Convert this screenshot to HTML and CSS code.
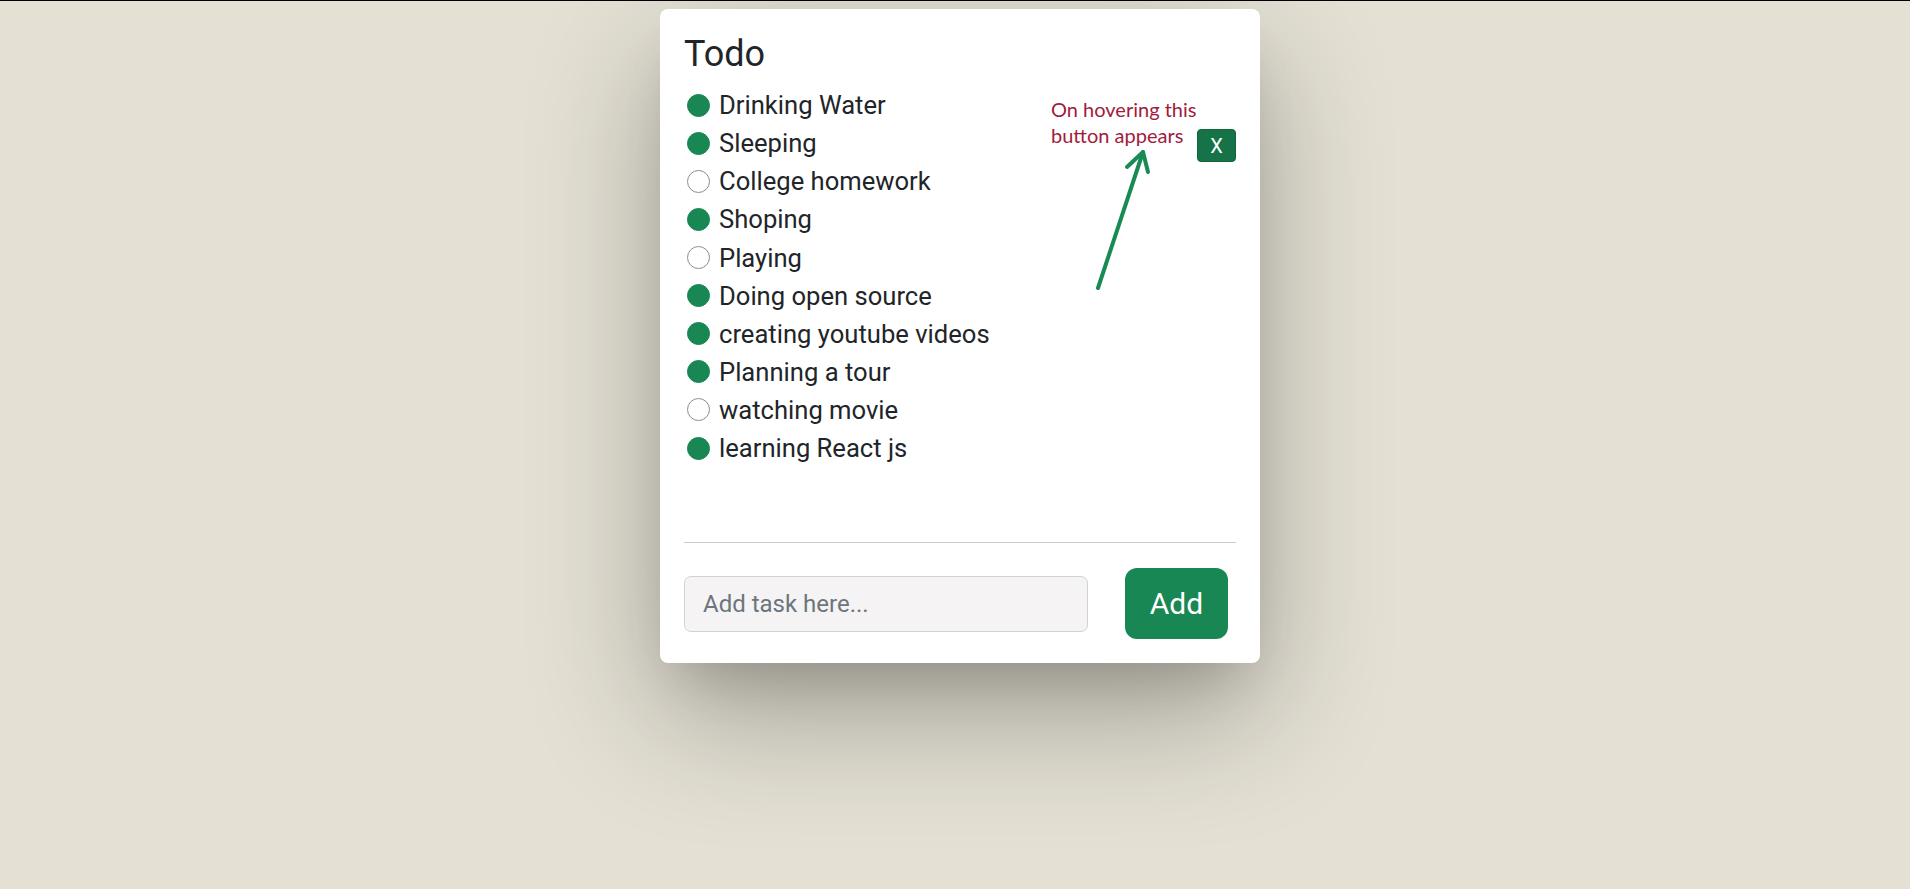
FILE: index.html
```html
<!DOCTYPE html>
<html lang="en">
<head>
<meta charset="utf-8">
<title>Todo</title>
<link rel="stylesheet" href="styles.css">
</head>
<body>
<div class="topline"></div>
<div class="page">
  <div class="card">
    <h1 class="title">Todo</h1>
    <ul class="list">
      <li class="item"><span class="dot on"></span><span class="label">Drinking Water</span></li>
      <li class="item"><span class="dot on"></span><span class="label">Sleeping</span><button class="del">X</button></li>
      <li class="item"><span class="dot"></span><span class="label">College homework</span></li>
      <li class="item"><span class="dot on"></span><span class="label">Shoping</span></li>
      <li class="item"><span class="dot"></span><span class="label">Playing</span></li>
      <li class="item"><span class="dot on"></span><span class="label">Doing open source</span></li>
      <li class="item"><span class="dot on"></span><span class="label">creating youtube videos</span></li>
      <li class="item"><span class="dot on"></span><span class="label">Planning a tour</span></li>
      <li class="item"><span class="dot"></span><span class="label">watching movie</span></li>
      <li class="item"><span class="dot on"></span><span class="label">learning React js</span></li>
    </ul>
    <hr class="divider">
    <div class="form">
      <input class="task" type="text" placeholder="Add task here...">
      <button class="add">Add</button>
    </div>
    <div class="note">On hovering this<br>button appears</div>
    <svg class="arrow" width="80" height="160" viewBox="0 0 80 160">
      <g fill="none" stroke="#1a8a55" stroke-width="4" stroke-linecap="round" stroke-linejoin="round">
        <line x1="8" y1="146" x2="53" y2="10"/>
        <polyline points="37,25 53,10 58,30"/>
      </g>
    </svg>
  </div>
</div>
</body>
</html>
```
FILE: styles.css
```css
html, body {
  margin: 0;
  padding: 0;
}
body {
  background: #e4e0d4;
  font-family: Roboto, "Liberation Sans", sans-serif;
  color: #212529;
  min-height: 889px;
}
.topline {
  height: 1px;
  background: #000;
}
.page {
  display: flex;
  justify-content: center;
  padding-left: 10px;
  padding-top: 8px;
}
.card {
  position: relative;
  box-sizing: border-box;
  width: 600px;
  background: #fff;
  border-radius: 8px;
  padding: 24px 24px 24px 24px;
  box-shadow: 0 50px 130px rgba(0, 0, 0, 0.3), 0 30px 50px -20px rgba(0, 0, 0, 0.15);
}
.title {
  margin: 0 0 10px 0;
  font-size: 36px;
  font-weight: 400;
  line-height: 1.2;
}
.list {
  list-style: none;
  margin: 0;
  padding: 0;
  min-height: 456px;
}
.item {
  display: flex;
  align-items: center;
  font-size: 25.6px;
  line-height: 38.1px;
  height: 38.1px;
}
.dot {
  box-sizing: border-box;
  width: 23px;
  height: 23px;
  border-radius: 50%;
  border: 1px solid #8c8c8c;
  background: #fff;
  margin: 0 9px 0 3px;
  flex: none;
}
.dot.on {
  background: #198754;
  border-color: #198754;
}
.del {
  margin-left: auto;
  align-self: flex-end;
  width: 39px;
  height: 33px;
  padding: 0;
  border: 1px solid #13653f;
  border-radius: 4px;
  background: #157347;
  color: #fff;
  font-family: Roboto, sans-serif;
  font-size: 20px;
  line-height: 1;
}
.divider {
  margin: 0;
  border: 0;
  border-top: 1px solid #c9cacb;
}
.form {
  display: flex;
  align-items: center;
  gap: 37px;
  margin-top: 25px;
  padding-right: 8px;
}
.task {
  box-sizing: border-box;
  width: 404px;
  height: 56px;
  padding: 0 18px;
  border: 1px solid #ced4da;
  border-radius: 7px;
  background: #f5f3f4;
  font-family: Roboto, sans-serif;
  font-size: 24px;
  color: #212529;
}
.task::placeholder {
  color: #6c757d;
}
.add {
  box-sizing: border-box;
  width: 103px;
  height: 71px;
  border: 0;
  border-radius: 12px;
  background: #198754;
  color: #fff;
  font-family: Roboto, sans-serif;
  font-size: 30px;
  padding: 0;
}
.note {
  position: absolute;
  left: 391px;
  top: 87px;
  font-family: Lato, "Open Sans", sans-serif;
  font-size: 20px;
  line-height: 26px;
  color: #a01c3c;
}
.arrow {
  position: absolute;
  left: 430px;
  top: 133px;
}
```
